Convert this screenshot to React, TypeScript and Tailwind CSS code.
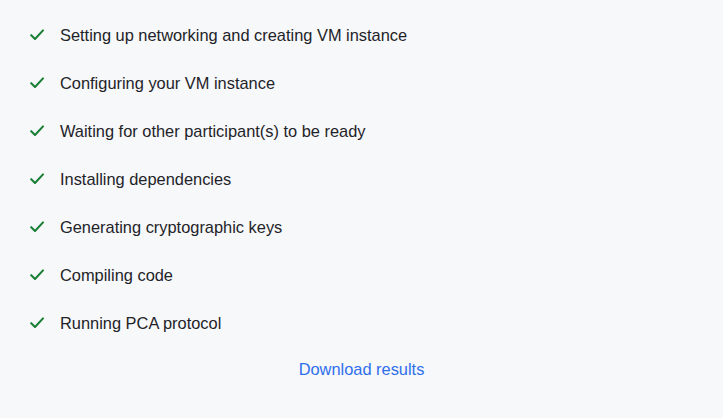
const steps = [
  'Setting up networking and creating VM instance',
  'Configuring your VM instance',
  'Waiting for other participant(s) to be ready',
  'Installing dependencies',
  'Generating cryptographic keys',
  'Compiling code',
  'Running PCA protocol',
];

const CheckIcon = () => (
  <svg
    viewBox="0 0 16 16"
    width="16"
    height="16"
    fill="none"
    className="shrink-0 stroke-[#1a7f37]"
    strokeWidth="2.1"
    strokeLinecap="round"
    strokeLinejoin="round"
  >
    <path d="M2.2 8.2L6 12L14 3.4" />
  </svg>
);

export default function App() {
  return (
    <div className="min-h-[418px] w-full bg-[#f6f8fa] font-['Liberation_Sans',Arial,sans-serif] text-[#1f2328]">
      <ul className="flex flex-col gap-6 pl-[29px] pt-[23px]">
        {steps.map((step) => (
          <li key={step} className="flex items-center gap-[15px] text-[16.4px] leading-6">
            <CheckIcon />
            <span>{step}</span>
          </li>
        ))}
      </ul>
      <div className="mt-[22px] flex justify-center">
        <a href="#" className="text-[16.4px] leading-6 text-[#2f6feb]">
          Download results
        </a>
      </div>
    </div>
  );
}
